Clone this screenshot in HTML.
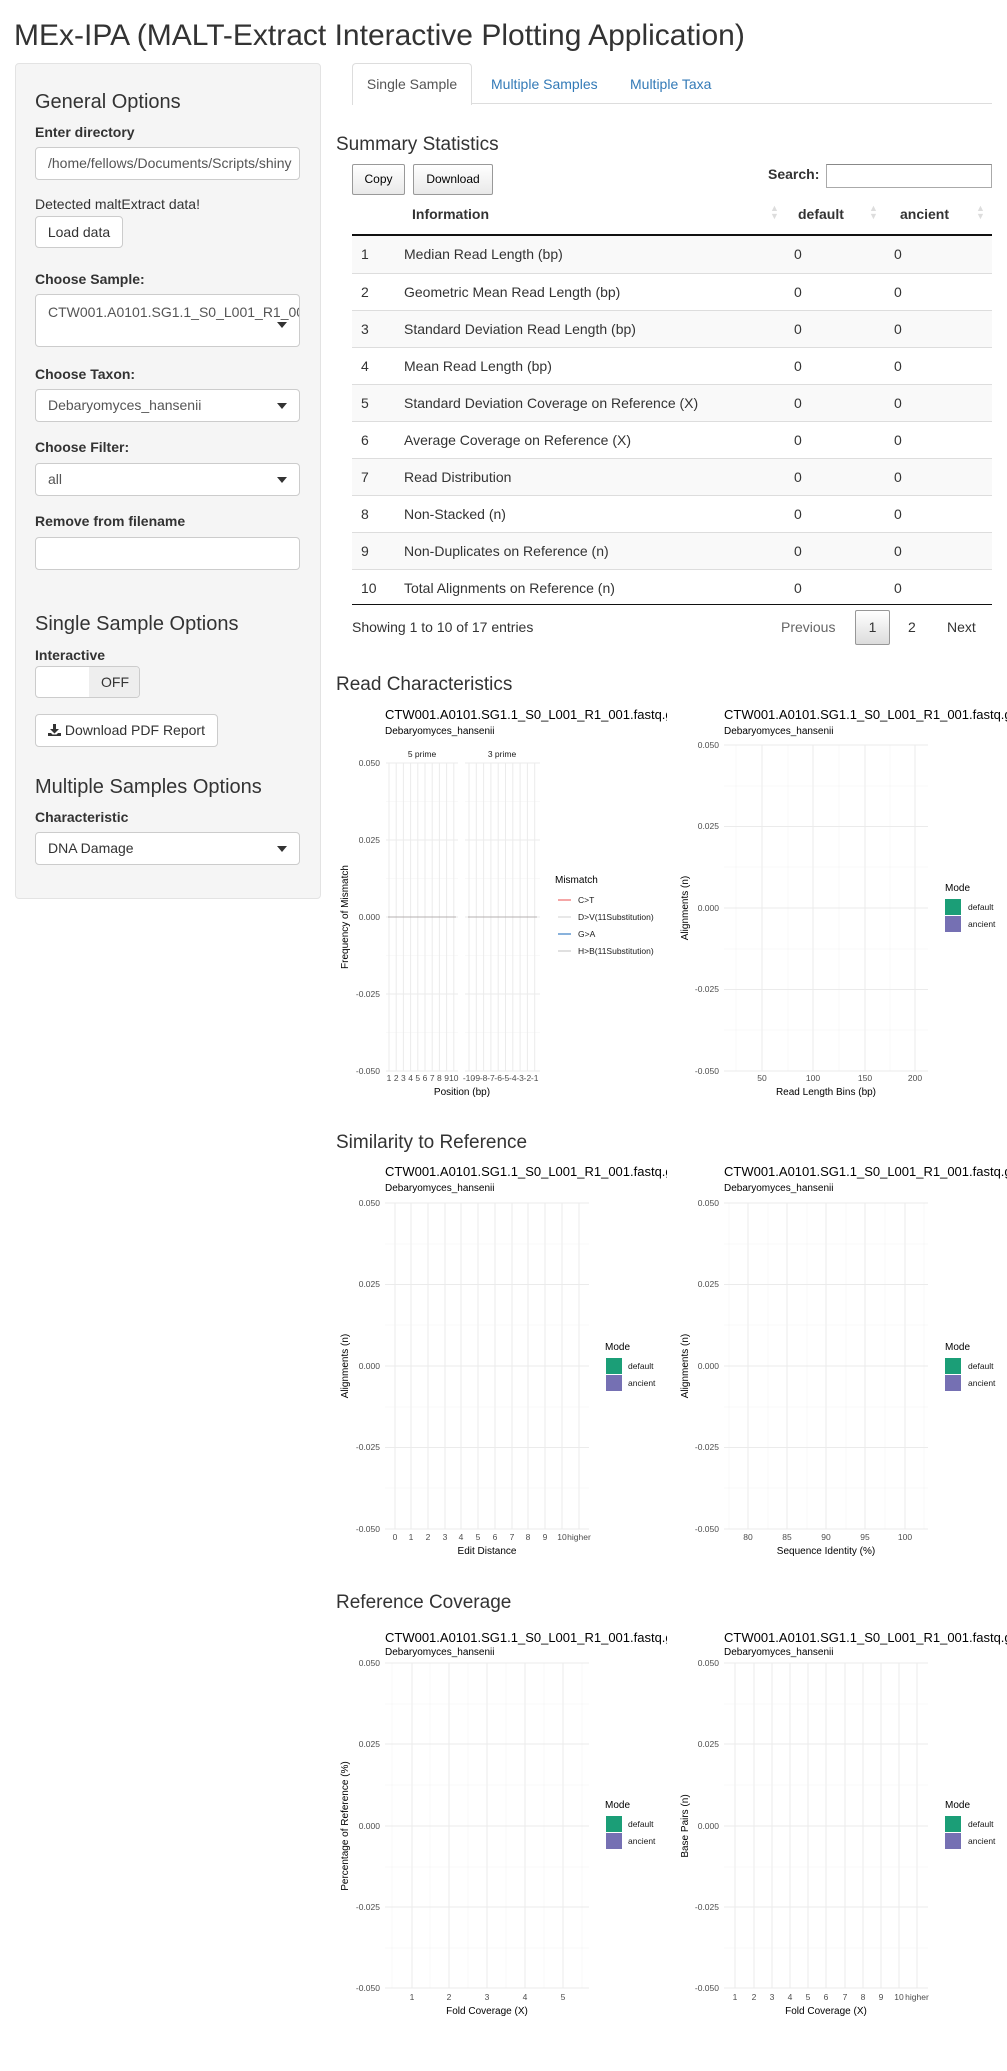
<!DOCTYPE html>
<html><head><meta charset="utf-8">
<style>
*{box-sizing:border-box;margin:0;padding:0}
body{width:1007px;height:2071px;position:relative;background:#fff;font-family:"Liberation Sans",Arial,sans-serif;color:#333;font-size:14px;overflow:hidden}
.a{position:absolute;white-space:nowrap}
.h3{font-size:20px;line-height:24px}
.h3m{font-size:19px;line-height:24px}
.lb{font-weight:bold;font-size:14px;line-height:16px}
.inp{position:absolute;border:1px solid #ccc;border-radius:4px;background:#fff;font-size:14px;color:#555;padding-left:12px;overflow:hidden;white-space:nowrap}
.car{position:absolute;width:0;height:0;border-left:5px solid transparent;border-right:5px solid transparent;border-top:6px solid #333}
.btn{position:absolute;border:1px solid #ccc;border-radius:4px;background:#fff;font-size:14px;color:#333;text-align:center}
.dbtn{position:absolute;border:1px solid #999;border-radius:2px;background:linear-gradient(#fff,#e9e9e9);font-size:12px;color:#000;text-align:center;line-height:29px}
.row{position:absolute;left:352px;width:640px;height:37px;border-top:1px solid #ddd;font-size:14px;line-height:36px}
.row span{position:absolute}
</style></head><body>

<div class="a" style="left:14px;top:17px;font-size:30px;line-height:37px;color:#333">MEx-IPA (MALT-Extract Interactive Plotting Application)</div>

<div class="a" style="left:15px;top:63px;width:306px;height:836px;background:#f5f5f5;border:1px solid #e3e3e3;border-radius:4px"></div>
<div class="a h3" style="left:35px;top:90px">General Options</div>
<div class="a lb" style="left:35px;top:124px">Enter directory</div>
<div class="inp" style="left:35px;top:147px;width:265px;height:33px;line-height:31px">/home/fellows/Documents/Scripts/shiny</div>
<div class="a" style="left:35px;top:196px;font-size:14px">Detected maltExtract data!</div>
<div class="btn" style="left:35px;top:216px;width:88px;height:32px;line-height:30px">Load data</div>
<div class="a lb" style="left:35px;top:271px">Choose Sample:</div>
<div class="inp" style="left:35px;top:294px;width:265px;height:53px;line-height:34px">CTW001.A0101.SG1.1_S0_L001_R1_001</div>
<div class="car" style="left:277px;top:322px"></div>
<div class="a lb" style="left:35px;top:366px">Choose Taxon:</div>
<div class="inp" style="left:35px;top:389px;width:265px;height:33px;line-height:31px">Debaryomyces_hansenii</div>
<div class="car" style="left:277px;top:403px"></div>
<div class="a lb" style="left:35px;top:439px">Choose Filter:</div>
<div class="inp" style="left:35px;top:463px;width:265px;height:33px;line-height:31px">all</div>
<div class="car" style="left:277px;top:477px"></div>
<div class="a lb" style="left:35px;top:513px">Remove from filename</div>
<div class="inp" style="left:35px;top:537px;width:265px;height:33px"></div>
<div class="a h3" style="left:35px;top:612px">Single Sample Options</div>
<div class="a lb" style="left:35px;top:647px">Interactive</div>
<div class="a" style="left:35px;top:666px;width:105px;height:32px;border:1px solid #ccc;border-radius:4px;background:#fff;overflow:hidden">
 <div class="a" style="left:53px;top:0;width:52px;height:30px;background:#eee;text-align:center;line-height:30px;font-size:14px">OFF</div></div>
<div class="btn" style="left:35px;top:714px;width:183px;height:33px;line-height:31px">
 <svg width="13" height="12" viewBox="0 0 13 12" style="vertical-align:-1px"><path d="M5 0h3v5h3l-4.5 4.5L2 5h3z" fill="#333"/><path d="M0 9h3l1.5 1.5h4L10 9h3v3H0z" fill="#333"/></svg> Download PDF Report</div>
<div class="a h3" style="left:35px;top:775px">Multiple Samples Options</div>
<div class="a lb" style="left:35px;top:809px">Characteristic</div>
<div class="inp" style="left:35px;top:832px;width:265px;height:33px;line-height:31px;color:#333">DNA Damage</div>
<div class="car" style="left:277px;top:846px"></div>

<div class="a" style="left:352px;top:103px;width:640px;height:1px;background:#ddd"></div>
<div class="a" style="left:352px;top:63px;width:120px;height:42px;background:#fff;border:1px solid #ddd;border-bottom:none;border-radius:4px 4px 0 0;text-align:center;line-height:40px;color:#555">Single Sample</div>
<div class="a" style="left:491px;top:74px;color:#337ab7;line-height:20px">Multiple Samples</div>
<div class="a" style="left:630px;top:74px;color:#337ab7;line-height:20px">Multiple Taxa</div>

<div class="a h3m" style="left:336px;top:133px">Summary Statistics</div>
<div class="dbtn" style="left:352px;top:164px;width:53px;height:31px">Copy</div>
<div class="dbtn" style="left:413px;top:164px;width:80px;height:31px">Download</div>
<div class="a lb" style="left:768px;top:166px">Search:</div>
<div class="a" style="left:826px;top:164px;width:166px;height:24px;border:1px solid #aaa;border-top-color:#888;background:#fff"></div>

<div class="a" style="left:412px;top:206px;font-weight:bold">Information</div>
<div class="a" style="left:798px;top:206px;font-weight:bold">default</div>
<div class="a" style="left:900px;top:206px;font-weight:bold">ancient</div>
<div class="a" style="left:770px;top:204px;color:#ddd;font-size:9px;line-height:8px">▲<br>▼</div>
<div class="a" style="left:869px;top:204px;color:#ddd;font-size:9px;line-height:8px">▲<br>▼</div>
<div class="a" style="left:976px;top:204px;color:#ddd;font-size:9px;line-height:8px">▲<br>▼</div>
<div class="a" style="left:352px;top:234px;width:640px;height:2px;background:#111"></div>

<div class="row" style="top:236px;background:#f9f9f9;border-top:none"><span style="left:9px">1</span><span style="left:52px">Median Read Length (bp)</span><span style="left:442px">0</span><span style="left:542px">0</span></div>
<div class="row" style="top:273px"><span style="left:9px">2</span><span style="left:52px">Geometric Mean Read Length (bp)</span><span style="left:442px">0</span><span style="left:542px">0</span></div>
<div class="row" style="top:310px;background:#f9f9f9"><span style="left:9px">3</span><span style="left:52px">Standard Deviation Read Length (bp)</span><span style="left:442px">0</span><span style="left:542px">0</span></div>
<div class="row" style="top:347px"><span style="left:9px">4</span><span style="left:52px">Mean Read Length (bp)</span><span style="left:442px">0</span><span style="left:542px">0</span></div>
<div class="row" style="top:384px;background:#f9f9f9"><span style="left:9px">5</span><span style="left:52px">Standard Deviation Coverage on Reference (X)</span><span style="left:442px">0</span><span style="left:542px">0</span></div>
<div class="row" style="top:421px"><span style="left:9px">6</span><span style="left:52px">Average Coverage on Reference (X)</span><span style="left:442px">0</span><span style="left:542px">0</span></div>
<div class="row" style="top:458px;background:#f9f9f9"><span style="left:9px">7</span><span style="left:52px">Read Distribution</span><span style="left:442px">0</span><span style="left:542px">0</span></div>
<div class="row" style="top:495px"><span style="left:9px">8</span><span style="left:52px">Non-Stacked (n)</span><span style="left:442px">0</span><span style="left:542px">0</span></div>
<div class="row" style="top:532px;background:#f9f9f9"><span style="left:9px">9</span><span style="left:52px">Non-Duplicates on Reference (n)</span><span style="left:442px">0</span><span style="left:542px">0</span></div>
<div class="row" style="top:569px"><span style="left:9px">10</span><span style="left:52px">Total Alignments on Reference (n)</span><span style="left:442px">0</span><span style="left:542px">0</span></div>
<div class="a" style="left:352px;top:604px;width:640px;height:1px;background:#111"></div>

<div class="a" style="left:352px;top:619px">Showing 1 to 10 of 17 entries</div>
<div class="a" style="left:781px;top:619px;color:#666">Previous</div>
<div class="a" style="left:855px;top:610px;width:35px;height:35px;border:1px solid #979797;border-radius:2px;background:linear-gradient(#fff,#dcdcdc);text-align:center;line-height:33px">1</div>
<div class="a" style="left:908px;top:619px">2</div>
<div class="a" style="left:947px;top:619px">Next</div>

<div class="a h3m" style="left:336px;top:673px">Read Characteristics</div>
<div class="a h3m" style="left:336px;top:1131px">Similarity to Reference</div>
<div class="a h3m" style="left:336px;top:1591px">Reference Coverage</div>

<svg class="a" style="left:0;top:0" width="1007" height="2071" font-family="Liberation Sans, Arial, sans-serif">
<defs><clipPath id="cl"><rect x="0" y="0" width="667" height="2071"/></clipPath></defs>
<g fill="#000">
 <g clip-path="url(#cl)" font-size="13">
  <text x="385" y="719">CTW001.A0101.SG1.1_S0_L001_R1_001.fastq.gz</text>
  <text x="385" y="1176">CTW001.A0101.SG1.1_S0_L001_R1_001.fastq.gz</text>
  <text x="385" y="1642">CTW001.A0101.SG1.1_S0_L001_R1_001.fastq.gz</text>
 </g>
 <g font-size="13">
  <text x="724" y="719">CTW001.A0101.SG1.1_S0_L001_R1_001.fastq.gz</text>
  <text x="724" y="1176">CTW001.A0101.SG1.1_S0_L001_R1_001.fastq.gz</text>
  <text x="724" y="1642">CTW001.A0101.SG1.1_S0_L001_R1_001.fastq.gz</text>
 </g>
 <g font-size="10">
  <text x="385" y="734">Debaryomyces_hansenii</text><text x="724" y="734">Debaryomyces_hansenii</text>
  <text x="385" y="1191">Debaryomyces_hansenii</text><text x="724" y="1191">Debaryomyces_hansenii</text>
  <text x="385" y="1655">Debaryomyces_hansenii</text><text x="724" y="1655">Debaryomyces_hansenii</text>
 </g>
</g>

<g fill="none">
 <path stroke="#f3f3f3" stroke-width="0.6" d="M386 801.5H458M386 878.5H458M386 955.5H458M386 1032.5H458M465 801.5H540M465 878.5H540M465 955.5H540M465 1032.5H540"/>
 <path stroke="#ebebeb" stroke-width="1" d="M386 763H458M386 840H458M386 917H458M386 994H458M386 1071H458M465 763H540M465 840H540M465 917H540M465 994H540M465 1071H540
 M389 763V1071M396.2 763V1071M403.4 763V1071M410.6 763V1071M417.8 763V1071M425 763V1071M432.2 763V1071M439.4 763V1071M446.6 763V1071M453.8 763V1071
 M469 763V1071M476.3 763V1071M483.6 763V1071M490.9 763V1071M498.2 763V1071M505.5 763V1071M512.8 763V1071M520.1 763V1071M527.4 763V1071M534.7 763V1071"/>
 <path stroke="#b5b0b0" stroke-width="1" d="M388 917H456M468 917H537"/>
 <path stroke="#f3f3f3" stroke-width="0.6" d="M724 786H928M724 867H928M724 949H928M724 1030H928M736 745V1071M788 745V1071M839 745V1071M890 745V1071"/>
 <path stroke="#ebebeb" stroke-width="1" d="M724 745H928M724 826.5H928M724 908H928M724 989.5H928M724 1071H928M762 745V1071M813 745V1071M865 745V1071M915 745V1071"/>
 <path stroke="#f3f3f3" stroke-width="0.6" d="M385 1244H589M385 1325H589M385 1407H589M385 1488H589"/>
 <path stroke="#ebebeb" stroke-width="1" d="M385 1203H589M385 1284.5H589M385 1366H589M385 1447.5H589M385 1529H589M395 1203V1529M411 1203V1529M428 1203V1529M445 1203V1529M461 1203V1529M478 1203V1529M495 1203V1529M512 1203V1529M528 1203V1529M545 1203V1529M562 1203V1529M579 1203V1529"/>
 <path stroke="#f3f3f3" stroke-width="0.6" d="M724 1244H928M724 1325H928M724 1407H928M724 1488H928M729 1203V1529M768 1203V1529M807 1203V1529M846 1203V1529M885 1203V1529M924 1203V1529"/>
 <path stroke="#ebebeb" stroke-width="1" d="M724 1203H928M724 1284.5H928M724 1366H928M724 1447.5H928M724 1529H928M748 1203V1529M787 1203V1529M826 1203V1529M865 1203V1529M905 1203V1529"/>
 <path stroke="#f3f3f3" stroke-width="0.6" d="M385 1704H589M385 1785H589M385 1867H589M385 1948H589M392 1663V1988M430 1663V1988M468 1663V1988M506 1663V1988M544 1663V1988M582 1663V1988"/>
 <path stroke="#ebebeb" stroke-width="1" d="M385 1663H589M385 1744H589M385 1826H589M385 1907H589M385 1988H589M412 1663V1988M449 1663V1988M487 1663V1988M525 1663V1988M563 1663V1988"/>
 <path stroke="#f3f3f3" stroke-width="0.6" d="M724 1704H928M724 1785H928M724 1867H928M724 1948H928"/>
 <path stroke="#ebebeb" stroke-width="1" d="M724 1663H928M724 1744H928M724 1826H928M724 1907H928M724 1988H928M735 1663V1988M754 1663V1988M772 1663V1988M790 1663V1988M808 1663V1988M826 1663V1988M845 1663V1988M863 1663V1988M881 1663V1988M899 1663V1988M917 1663V1988"/>
</g>

<g font-size="8.5" fill="#4d4d4d" text-anchor="end">
 <text x="380" y="766">0.050</text><text x="380" y="843">0.025</text><text x="380" y="920">0.000</text><text x="380" y="997">-0.025</text><text x="380" y="1074">-0.050</text>
 <text x="719" y="748">0.050</text><text x="719" y="829">0.025</text><text x="719" y="911">0.000</text><text x="719" y="992">-0.025</text><text x="719" y="1074">-0.050</text>
 <text x="380" y="1206">0.050</text><text x="380" y="1287">0.025</text><text x="380" y="1369">0.000</text><text x="380" y="1450">-0.025</text><text x="380" y="1532">-0.050</text>
 <text x="719" y="1206">0.050</text><text x="719" y="1287">0.025</text><text x="719" y="1369">0.000</text><text x="719" y="1450">-0.025</text><text x="719" y="1532">-0.050</text>
 <text x="380" y="1666">0.050</text><text x="380" y="1747">0.025</text><text x="380" y="1829">0.000</text><text x="380" y="1910">-0.025</text><text x="380" y="1991">-0.050</text>
 <text x="719" y="1666">0.050</text><text x="719" y="1747">0.025</text><text x="719" y="1829">0.000</text><text x="719" y="1910">-0.025</text><text x="719" y="1991">-0.050</text>
</g>
<g font-size="8.5" fill="#4d4d4d" text-anchor="middle">
 <text x="389" y="1081">1</text><text x="396.2" y="1081">2</text><text x="403.4" y="1081">3</text><text x="410.6" y="1081">4</text><text x="417.8" y="1081">5</text><text x="425" y="1081">6</text><text x="432.2" y="1081">7</text><text x="439.4" y="1081">8</text><text x="446.6" y="1081">9</text><text x="453.8" y="1081">10</text>
 <text x="469" y="1081">-10</text><text x="476.3" y="1081">-9</text><text x="483.6" y="1081">-8</text><text x="490.9" y="1081">-7</text><text x="498.2" y="1081">-6</text><text x="505.5" y="1081">-5</text><text x="512.8" y="1081">-4</text><text x="520.1" y="1081">-3</text><text x="527.4" y="1081">-2</text><text x="534.7" y="1081">-1</text>
 <text x="762" y="1081">50</text><text x="813" y="1081">100</text><text x="865" y="1081">150</text><text x="915" y="1081">200</text>
 <text x="395" y="1540">0</text><text x="411" y="1540">1</text><text x="428" y="1540">2</text><text x="445" y="1540">3</text><text x="461" y="1540">4</text><text x="478" y="1540">5</text><text x="495" y="1540">6</text><text x="512" y="1540">7</text><text x="528" y="1540">8</text><text x="545" y="1540">9</text><text x="562" y="1540">10</text><text x="579" y="1540">higher</text>
 <text x="748" y="1540">80</text><text x="787" y="1540">85</text><text x="826" y="1540">90</text><text x="865" y="1540">95</text><text x="905" y="1540">100</text>
 <text x="412" y="2000">1</text><text x="449" y="2000">2</text><text x="487" y="2000">3</text><text x="525" y="2000">4</text><text x="563" y="2000">5</text>
 <text x="735" y="2000">1</text><text x="754" y="2000">2</text><text x="772" y="2000">3</text><text x="790" y="2000">4</text><text x="808" y="2000">5</text><text x="826" y="2000">6</text><text x="845" y="2000">7</text><text x="863" y="2000">8</text><text x="881" y="2000">9</text><text x="899" y="2000">10</text><text x="917" y="2000">higher</text>
 <text x="422" y="757" fill="#1a1a1a">5 prime</text><text x="502" y="757" fill="#1a1a1a">3 prime</text>
</g>
<g font-size="10" fill="#000" text-anchor="middle">
 <text x="462" y="1095">Position (bp)</text>
 <text x="826" y="1095">Read Length Bins (bp)</text>
 <text x="487" y="1554">Edit Distance</text>
 <text x="826" y="1554">Sequence Identity (%)</text>
 <text x="487" y="2014">Fold Coverage (X)</text>
 <text x="826" y="2014">Fold Coverage (X)</text>
 <text transform="translate(348 917) rotate(-90)">Frequency of Mismatch</text>
 <text transform="translate(688 908) rotate(-90)">Alignments (n)</text>
 <text transform="translate(348 1366) rotate(-90)">Alignments (n)</text>
 <text transform="translate(688 1366) rotate(-90)">Alignments (n)</text>
 <text transform="translate(348 1826) rotate(-90)">Percentage of Reference (%)</text>
 <text transform="translate(688 1826) rotate(-90)">Base Pairs (n)</text>
</g>
<g font-size="10" fill="#000">
 <text x="555" y="883">Mismatch</text>
 <text x="945" y="891">Mode</text>
 <text x="605" y="1350">Mode</text><text x="945" y="1350">Mode</text>
 <text x="605" y="1808">Mode</text><text x="945" y="1808">Mode</text>
</g>
<g stroke-width="1.2">
 <path stroke="#ee6a6a" d="M558 900H571"/><path stroke="#d9d9d9" d="M558 917H571"/><path stroke="#3a7fc4" d="M558 934H571"/><path stroke="#cccccc" d="M558 951H571"/>
</g>
<g font-size="8.5" fill="#1a1a1a">
 <text x="578" y="903">C&gt;T</text><text x="578" y="920">D&gt;V(11Substitution)</text><text x="578" y="937">G&gt;A</text><text x="578" y="954">H&gt;B(11Substitution)</text>
 <text x="968" y="910">default</text><text x="968" y="927">ancient</text>
 <text x="628" y="1369">default</text><text x="628" y="1386">ancient</text>
 <text x="968" y="1369">default</text><text x="968" y="1386">ancient</text>
 <text x="628" y="1827">default</text><text x="628" y="1844">ancient</text>
 <text x="968" y="1827">default</text><text x="968" y="1844">ancient</text>
</g>
<g>
 <rect x="945" y="899" width="16" height="16" fill="#1b9e77"/><rect x="945" y="916" width="16" height="16" fill="#7570b3"/>
 <rect x="606" y="1358" width="16" height="16" fill="#1b9e77"/><rect x="606" y="1375" width="16" height="16" fill="#7570b3"/>
 <rect x="945" y="1358" width="16" height="16" fill="#1b9e77"/><rect x="945" y="1375" width="16" height="16" fill="#7570b3"/>
 <rect x="606" y="1816" width="16" height="16" fill="#1b9e77"/><rect x="606" y="1833" width="16" height="16" fill="#7570b3"/>
 <rect x="945" y="1816" width="16" height="16" fill="#1b9e77"/><rect x="945" y="1833" width="16" height="16" fill="#7570b3"/>
</g>
</svg>
</body></html>
